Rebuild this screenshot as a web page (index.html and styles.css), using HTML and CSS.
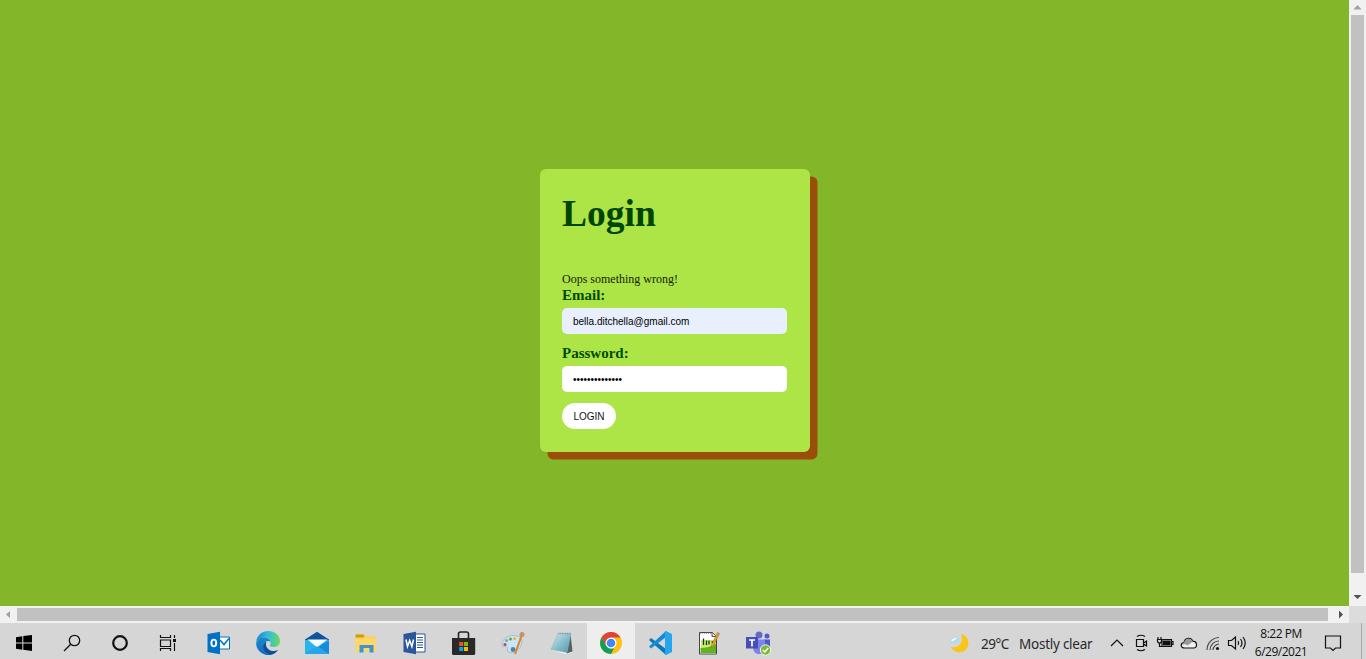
FILE: index.html
```html
<!DOCTYPE html>
<html lang="en">
<head>
<meta charset="utf-8">
<title>Login</title>
<link rel="stylesheet" href="styles.css">
</head>
<body>
<div class="viewport">
  <main class="page">
    <form class="card">
      <h1 class="title">Login</h1>
      <p class="error">Oops something wrong!</p>
      <label class="label" for="email">Email:</label>
      <input class="field field-filled" id="email" type="text" value="bella.ditchella@gmail.com" spellcheck="false">
      <label class="label" for="password">Password:</label>
      <input class="field" id="password" type="password" value="abcdefghijklmn">
      <button class="submit" type="button">LOGIN</button>
    </form>
  </main>
  <div class="vscroll">
    <svg class="arrow" viewBox="0 0 17 15"><path d="M4.500 9.500 8.500 5 12.500 9.500z" fill="#a0a0a0"/></svg>
    <div class="vthumb"></div>
    <svg class="arrow arrow-down" viewBox="0 0 17 17"><path d="M4.500 6h8L8.500 10z" fill="#505050"/></svg>
  </div>
</div>
<div class="hscroll">
  <svg class="harrow" viewBox="0 0 17 17"><path d="M10 5v7L6 8.500z" fill="#a0a0a0"/></svg>
  <div class="hthumb"></div>
  <svg class="harrow harrow-right" viewBox="0 0 21 17"><path d="M11 4.500v8l4-4z" fill="#505050"/></svg>
  <div class="corner"></div>
</div>
<footer class="taskbar">
  <div class="system">
    <div class="cell"><svg viewBox="0 0 24 24"><path d="M4 6.300 10.300 5.300V11.500H4zM11.300 5.100 20 4v7.500h-8.700zM4 12.500h6.300v6.200L4 17.800zM11.300 12.500H20V20l-8.700-1.200z"/></svg></div>
    <div class="cell"><svg viewBox="0 0 24 24" fill="none" stroke="#111" stroke-width="1.300"><circle cx="14.500" cy="9.500" r="5.200"/><path d="M10.700 13.300 4 20"/></svg></div>
    <div class="cell"><svg viewBox="0 0 24 24" fill="none" stroke="#111" stroke-width="2.200"><circle cx="12" cy="12" r="6.800"/></svg></div>
    <div class="cell"><svg viewBox="0 0 24 24" fill="none" stroke="#111" stroke-width="1.200"><path d="M4.500 4v2.500h10V4M4.500 20v-2.500h10V20M4.500 9h10v6.500h-10zM18.500 4v3M18.500 12v8"/><path d="M17 8h3v3h-3z" fill="#111" stroke="none"/></svg></div>
  </div>
  <div class="apps">
    <div class="cell"><svg viewBox="0 0 24 24"><path d="M12 6h10.500v12H12z" fill="#fff" stroke="#0072c6"/><path d="m13 9 4 4.500L22 7.500" fill="none" stroke="#0072c6" stroke-width="1.500"/><path d="M.5 3 13 .8v22.400L.5 21z" fill="#0072c6"/><ellipse cx="6.800" cy="12" rx="2.400" ry="3.400" fill="none" stroke="#fff" stroke-width="1.900"/></svg></div>
    <div class="cell"><svg viewBox="0 0 24 24">
      <defs><linearGradient id="edge-top" x1="0" x2="1"><stop offset="0" stop-color="#1687ce"/><stop offset=".5" stop-color="#32bed8"/><stop offset="1" stop-color="#6bdb58"/></linearGradient><linearGradient id="edge-low" y2="1" x2="0"><stop stop-color="#168cc8"/><stop offset="1" stop-color="#1769c4"/></linearGradient></defs>
      <path d="M.3 11C.7 4.500 6 0 12 0c7 0 12 4.500 12 10 0 4-3 6-6.500 6-2.700 0-4.200-1-3.400-2.300C16 10.500 13.500 7 9.500 6.500 5 6 1.500 8 .3 11z" fill="url(#edge-top)"/>
      <path d="M.2 12C1 8 5 6 9 6.500c3 .3 5.200 2.100 5.600 4.500-2-2-6-1.500-6 3 0 6 6 8.500 12.500 5.800C17 25 11 25 6.500 22.500 2 20 0 16 .2 12z" fill="url(#edge-low)"/>
      <path d="M9.500 11c-4.500 4.500-1.500 11 4.500 12.500 3-.1 6-1.700 8.300-4.500-5.300 2.500-11 .5-12.200-4.500-.3-1.500-.2-2.600.4-3.500z" fill="#124f8f"/></svg></div>
    <div class="cell"><svg viewBox="0 0 24 24"><path d="M0 8.500 12 .8l12 7.700V11H0z" fill="#0d559e"/><path d="M0 9h24v14H0z" fill="#29b4ee"/><path d="m12 16.500 12-7V23z" fill="#168bdc"/><path d="M2.500 8.500h20L13 15.500q-1 .8-2 0z" fill="#f7fbff"/><path d="M0 23 10.500 16q1.500-1 3 0L24 23z" fill="#29a4e8"/></svg></div>
    <div class="cell"><svg viewBox="0 0 24 24"><path d="M1.500 3.500h9l2 2H22v15H1.500z" fill="#ffce55"/><path d="M1.500 3.500h8l1 1.500-1.500 1.500H1.500z" fill="#d09a10"/><path d="M1.500 7.500H22v12.500H1.500z" fill="#ffd767"/><path d="M5.500 21.500V14h14v7.500h-4V17h-6v4.500z" fill="#3e94ce"/></svg></div>
    <div class="cell"><svg viewBox="0 0 24 24"><path d="M12 3h10v18H12z" fill="#fff" stroke="#2b579a"/><path d="M14 6.500h6M14 9h6M14 11.500h6M14 14h6M14 16.500h6" stroke="#2b579a"/><path d="M.5 3 13 .8v22.400L.5 21z" fill="#2b579a"/><path d="m3 8.500 1.500 7 2.200-6 2.200 6 1.600-7" fill="none" stroke="#fff" stroke-width="1.500"/></svg></div>
    <div class="cell"><svg viewBox="0 0 24 24"><path d="M6.500 7V3q0-2 2-2h6q2 0 2 2v4" fill="none" stroke="#222" stroke-width="1.600"/><path d="M0 7h23.200v15.500q0 1.500-1.500 1.500H1.500Q0 24 0 22.500z" fill="#292929"/><path d="M7.200 11h4v4h-4z" fill="#f25022"/><path d="M12 11h4v4h-4z" fill="#7fba00"/><path d="M7.200 16h4v4h-4z" fill="#00a4ef"/><path d="M12 16h4v4h-4z" fill="#ffb900"/></svg></div>
    <div class="cell"><svg viewBox="0 0 24 24"><path d="M1 14C1 7 9 3 16 5c6 1.500 6 7 3 11.500-4 5-10 6-12 4-2-2 1-4-1-5-2-.7-5 2-5-1.500z" fill="#cce5f4" stroke="#8bb2c8" stroke-width=".7"/><circle cx="4" cy="13.500" r="1.600" fill="#c34d43"/><circle cx="5.500" cy="9.500" r="1.600" fill="#78a9c0"/><circle cx="9.500" cy="8" r="1.600" fill="#6daa44"/><circle cx="13.500" cy="7.500" r="1.500" fill="#e2b646"/><circle cx="12" cy="18.500" r="2.400" fill="#4a86b4"/><path d="m20.500 5-6.500 18" stroke="#d68a35" stroke-width="2.200"/><circle cx="21" cy="3.500" r="2.500" fill="#c79362"/></svg></div>
    <div class="cell"><svg viewBox="0 0 24 24">
      <defs><linearGradient id="pad" x2="1" y2="1"><stop stop-color="#c9e8ef"/><stop offset="1" stop-color="#4d98aa"/></linearGradient></defs>
      <path d="m1 19 14 4 7-1-3-6z" fill="#f2f2f2"/><path d="m20.500 3 2 17.500-6 2z" fill="#56615f"/><path d="M8 2.500h13L17 21.500 1 18.500z" fill="url(#pad)" stroke="#83aeb7" stroke-width=".5"/><path d="M8.500 2.500h12.500" stroke="#8c999c" stroke-width="1.500" stroke-dasharray="1 .7"/></svg></div>
    <div class="cell cell-active"><svg viewBox="0 0 24 24"><circle cx="12" cy="12" r="11" fill="#fbc116"/><path d="M2.500 6.500A11 11 0 0 1 21.530 6.500H12L7.240 14.750z" fill="#db4437"/><path d="M2.500 6.500 7.240 14.750 12 17.500h3L12 23A11 11 0 0 1 2.500 6.500z" fill="#129d58"/><circle cx="12" cy="12" r="5.500" fill="#fff"/><circle cx="12" cy="12" r="4.300" fill="#4285f4"/></svg></div>
    <div class="cell"><svg viewBox="0 0 24 24"><path d="M1 9 3 7l15 11v6z" fill="#0878be"/><path d="M18 0v6L3 17.500l-2-2z" fill="#168bd2"/><path d="m18 0 6 3v18l-6 3-1-.5V.5z" fill="#24a5ed"/></svg></div>
    <div class="cell"><svg viewBox="0 0 24 24"><path d="M2.500 1.500h13l4 4V23h-17z" fill="#fff" stroke="#444"/><path d="M4 9h15v12.500H4z" fill="#c6ef70"/><path d="M3.500 17q8 0 15.500-4v9H3.500z" fill="#60b51b"/><path d="M15 1.500v4h4.500" fill="#ddd" stroke="#555"/><path d="M6.500 14V7.500M9.500 14v-4.500M12 9.500v4M14.500 11h2" stroke="#20351c" stroke-width="1.300"/><path d="M3 2h12" stroke="#555" stroke-dasharray="1 1"/><path d="m14.500 14 6-12.500 2 1-6 12.500-2.300 2z" fill="#e6a12c" stroke="#8c5b23" stroke-width=".5"/></svg></div>
    <div class="cell"><svg class="teams" viewBox="0 0 24 24"><circle cx="13" cy="4" r="3.500" fill="#6269c7"/><circle cx="21" cy="5" r="2.500" fill="#5059c9"/><path d="M18 8.500h6v7q0 4-4 4h-2z" fill="#5059c9"/><path d="M7 8.500h12V17q-1 6-6 6t-6-6z" fill="#7b83eb"/><path d="M0 6h12v11.500H0z" fill="#464eb8"/><path d="M3 9h6M6 9v6.500" stroke="#fff" stroke-width="1.700"/><circle cx="19.500" cy="19" r="5.200" fill="#7cb934" stroke="#f5f5f5"/><path d="m16.800 19 2 2 3.500-4" fill="none" stroke="#fff" stroke-width="1.500"/></svg></div>
  </div>
  <div class="weather">
    <svg viewBox="0 0 24 24"><path d="M14 1c12 3 10 20-1 21-5 .5-9-2-11-6 9 2 15-5 12-15z" fill="#f9c51b"/><path d="M2 12q-3-5 2-6 2-4 6-1 4 1 2 5-1 2-4 2z" fill="#b8daf0"/><path d="M3 9q3-2 5-3" stroke="#f5faff" stroke-width="2"/></svg>
    <span class="degrees">29°C</span><span class="sky">Mostly clear</span>
  </div>
  <div class="tray">
    <svg viewBox="0 0 24 24"><path d="m6 15 6-6 6 6"/></svg>
    <svg viewBox="0 0 24 24"><path d="M7.500 8.500h7v7h-7zM14.500 12l3-2v5l-3-2M8 5.500q4-2.500 8 0M8 18.500q4 2.500 8 0"/></svg>
    <svg viewBox="0 0 24 24"><path d="M9 8.500h9.500v7H9zM18.500 10.500H20v3h-1.500M5 6v2M8 6v2M4.500 8.500h4V10q0 2-2 2t-2-2zM6.500 12v3.500H9"/><path d="M10.500 10h6.500v4h-6.500z" fill="#111"/></svg>
    <svg viewBox="0 0 24 24"><path d="M7.500 17C3.500 17 3 12 7 11.500 8 6.500 14 6 16 10.500c4-.5 5 6 1 6.500z" fill="#f1f1f1"/><path d="M7 11.500c1-5 7-5.500 9-1l-5.500 4q-2-2-5-.5 0-2 1.500-2.500z" fill="#999" stroke="none"/></svg>
    <svg viewBox="0 0 24 24"><path d="M6 19C6 12 11 7 18 6.500M9 19c0-5 4-9 9-9M12 19c0-3 3-6 6-6" stroke="#444"/><circle cx="16.500" cy="17.500" r="1.600" fill="#111" stroke="none"/></svg>
    <svg viewBox="0 0 24 24"><path d="M3.500 9.500h3L10.500 6v12l-4-3.500h-3zM13 10q1.500 2 0 4M15.500 8q3 4 0 8M18 6q4.500 6 0 12"/></svg>
  </div>
  <div class="clock"><span class="time">8:22 PM</span><span>6/29/2021</span></div>
  <svg class="notice" viewBox="0 0 24 24"><path d="M4.500 5h15v12h-5L12 19.500 9.500 17h-5z" fill="none" stroke="#111" stroke-width="1.200"/></svg>
  <div class="desktop-edge"></div>
</footer>
</body>
</html>
```

FILE: styles.css
```css
* { box-sizing: border-box; }
body { margin: 0; width: 1366px; height: 659px; overflow: hidden; display: flex; flex-direction: column; font-family: "Liberation Serif", serif; }
svg { display: block; flex: none; }
.viewport { display: flex; height: 606px; }
.page { width: 1349px; background: #84b629; display: flex; justify-content: center; align-items: flex-start; padding: 169px 0 0 1px; }
.card { width: 270px; height: 283px; padding: 23px 23px 0 22px; background: #ade547; border-radius: 6px; box-shadow: 7.5px 7.5px 0 #9b4e0a; display: flex; flex-direction: column; align-items: flex-start; }
.title { margin: 0 0 36px; font-size: 37.5px; line-height: 44px; color: #004600; }
.error { margin: 0; font-size: 12px; line-height: 15px; color: #151b08; }
.label { font-size: 15px; font-weight: bold; line-height: 17px; margin-bottom: 4px; color: #004b00; }
.field { width: 225px; height: 26px; border: 0; border-radius: 5px; padding: 1px 11px 0; margin-bottom: 11px; background: #fff; font: 10px "Liberation Sans", sans-serif; color: #000; }
.field-filled { background: #e8f0fe; }
.submit { width: 54px; height: 26px; padding: 0; border: 0; border-radius: 13px; background: #fff; color: #111; font: 10px "Liberation Sans", sans-serif; }
.vscroll { width: 17px; background: #f1f1f1; display: flex; flex-direction: column; }
.arrow { width: 17px; height: 15px; }
.vthumb { width: 13px; height: 558px; margin-left: 2px; background: #c1c1c1; }
.arrow-down { height: 17px; margin-top: auto; }
.hscroll { height: 17px; background: #f1f1f1; display: flex; align-items: center; }
.harrow { width: 17px; height: 17px; }
.hthumb { width: 1311px; height: 13px; background: #c1c1c1; }
.harrow-right { width: 21px; }
.corner { width: 17px; height: 17px; background: #dcdcdc; }
.taskbar { height: 36px; background: #d6d6d6; display: flex; overflow: hidden; }
.system, .apps { display: flex; }
.system .cell { width: 48px; }
.apps { margin-left: 2px; }
.cell { width: 49px; height: 36px; padding-top: 4px; display: flex; justify-content: center; align-items: center; }
.cell svg { width: 24px; height: 24px; }
.cell .teams { overflow: visible; }
.cell-active { width: 48px; margin-left: 1px; background: #eee; }
.weather { display: flex; align-items: center; width: 156px; margin-left: 167px; padding-top: 5px; font: 13.500px/20px "Noto Sans", "Open Sans", sans-serif; color: #292929; }
.weather svg { width: 21px; height: 21px; margin-right: 11px; }
.degrees { width: 38px; letter-spacing: -.5px; }
.sky { white-space: nowrap; letter-spacing: -.25px; }
.tray { display: flex; align-items: center; padding-top: 4px; }
.tray svg { width: 24px; height: 24px; fill: none; stroke: #111; stroke-width: 1.200; }
.clock { width: 56px; margin-left: 4px; padding-top: 2px; display: flex; flex-direction: column; align-items: center; font: 12px/18px "Open Sans", sans-serif; letter-spacing: -.5px; color: #111; white-space: nowrap; }
.notice { width: 24px; height: 24px; margin: 8px 0 0 12px; }
.desktop-edge { width: 1px; margin-left: auto; margin-right: 4px; background: #a8a8a8; }
```
